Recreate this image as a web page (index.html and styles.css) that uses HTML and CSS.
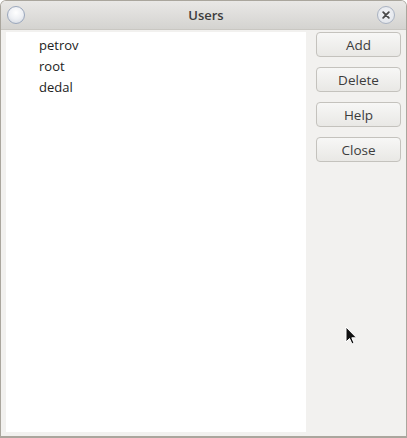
FILE: index.html
```html
<!DOCTYPE html>
<html>
<head>
<meta charset="utf-8">
<link rel="stylesheet" href="styles.css">
</head>
<body>
<div class="window">
  <div class="titlebar">
    <span class="tb-btn round"></span>
    <span class="title">Users</span>
    <span class="tb-btn close">
      <svg width="17" height="17" viewBox="0 0 17 17"><path d="M5.5 5.5 L11.5 11.5 M11.5 5.5 L5.5 11.5" stroke="#4a4a4a" stroke-width="2" stroke-linecap="round"/></svg>
    </span>
  </div>
  <div class="body">
    <ul class="list">
      <li>petrov</li>
      <li>root</li>
      <li>dedal</li>
    </ul>
    <div class="buttons">
      <button class="btn">Add</button>
      <button class="btn">Delete</button>
      <button class="btn">Help</button>
      <button class="btn">Close</button>
    </div>
  </div>
  <svg class="cursor" width="14" height="20" viewBox="0 0 14 20"><path d="M1 1 L1 16 L4.5 12.5 L7 18 L9 17 L6.8 11.8 L11.5 11.8 Z" fill="#111" stroke="#fff" stroke-width="1"/></svg>
</div>
</body>
</html>
```
FILE: styles.css
```css
* { box-sizing: border-box; }
html, body { margin: 0; padding: 0; background: #fff; }
body { width: 407px; height: 438px; overflow: hidden; font-family: "Open Sans", "Noto Sans", sans-serif; }
.window {
  position: relative;
  width: 407px; height: 438px;
  background: #f2f1ef;
  border: 1px solid #aaa69d;
  border-bottom-width: 2px;
  border-radius: 6px 6px 0 0;
  display: flex; flex-direction: column;
  overflow: hidden;
}
.titlebar {
  height: 29px;
  flex: none;
  display: flex; align-items: center; justify-content: space-between;
  padding: 0 11px 0 6px;
  background: linear-gradient(#e9e8e6, #d4d3d0);
  border-bottom: 1px solid #c9c7c2;
}
.title { font-size: 13px; font-weight: 600; color: #3c3c3c; margin-left: 10px; }
.tb-btn { width: 18px; height: 18px; border-radius: 50%; display: block; }
.round {
  border: 1px solid #9aa7bc;
  background: radial-gradient(circle at 50% 35%, #ffffff 0%, #eef0f4 50%, #cdd3dc 100%);
}
.close {
  border: 1px solid #a9b2c2;
  background: radial-gradient(circle at 50% 40%, #f4f5f8 0%, #dde1e7 100%);
  position: relative;
}
.close svg { position: absolute; left: 0; top: 0; width: 16px; height: 16px; }
.body {
  flex: 1;
  display: flex;
  padding: 2px 5px 4px 5px;
}
.list {
  list-style: none; margin: 0; padding: 3px 0 0 33px;
  width: 300px; background: #fff;
  font-size: 13px; color: #222;
}
.list li { height: 21px; line-height: 21px; }
.buttons {
  flex: 1;
  display: flex; flex-direction: column; gap: 10px;
  padding: 0 0 0 10px;
}
.btn {
  width: 85px; height: 25px;
  font-family: inherit; font-size: 13.5px; color: #3c3c3c;
  border: 1px solid #c4c2bd; border-radius: 4px;
  background: linear-gradient(#f7f7f6, #e9e8e5);
  padding: 0;
}
.cursor { position: absolute; left: 344px; top: 325px; }
```
